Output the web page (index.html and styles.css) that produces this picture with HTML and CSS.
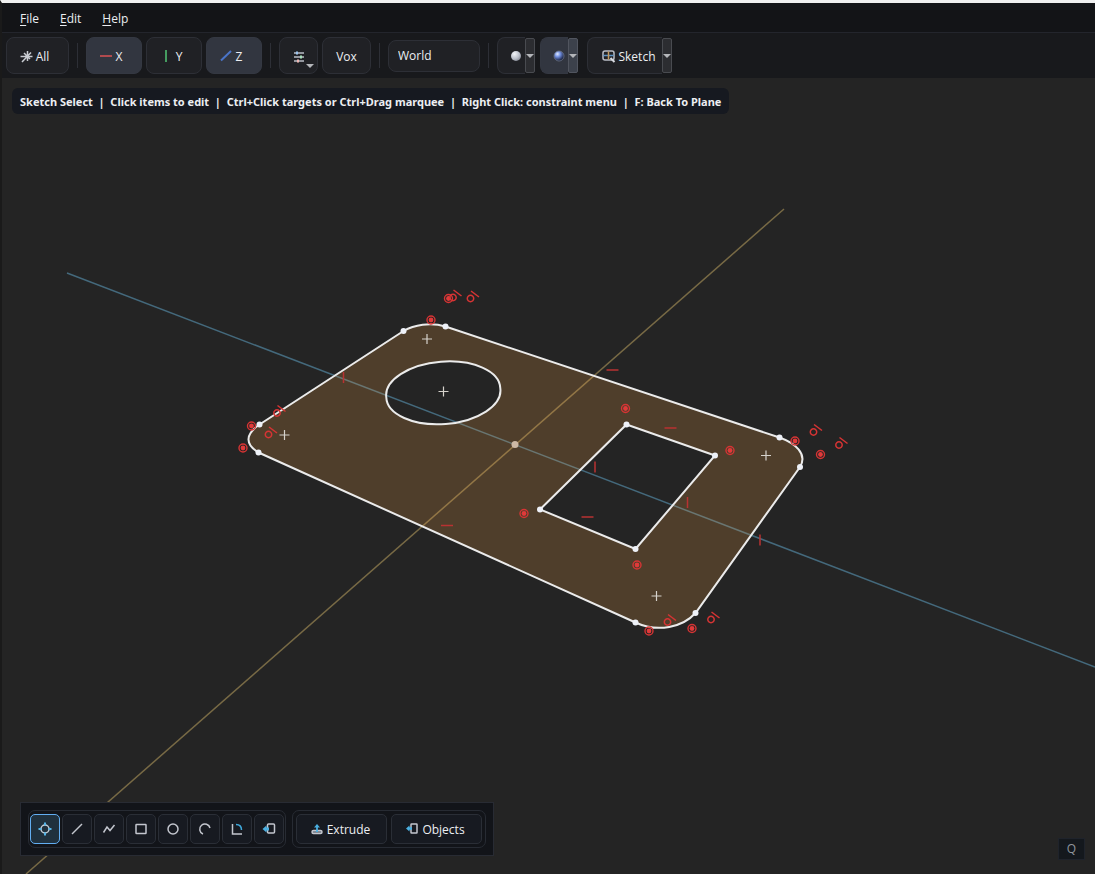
FILE: index.html
```html
<!DOCTYPE html>
<html lang="en">
<head>
    <meta charset="UTF-8">
    <meta name="viewport" content="width=device-width, initial-scale=1.0">
    <title>Sketch</title>
    <link rel="stylesheet" href="styles.css">
</head>
<body>
    <nav class="menu-bar">
        <button><u>F</u>ile</button>
        <button><u>E</u>dit</button>
        <button><u>H</u>elp</button>
    </nav>

    <div class="toolbar">
        <button class="tool-btn all-btn">
            <svg width="14" height="14" viewBox="0 0 14 14" fill="none" stroke="#c9ccd2" stroke-width="1.5">
                <path d="M0.500 6.500H12.500M7.500 1V11M2 12L11 2.500M4 3L10 9"/>
            </svg>
            All
        </button>
        <span class="separator"></span>
        <button class="tool-btn axis-btn active">
            <svg width="14" height="14" viewBox="0 0 14 14" stroke="#b04a4e" stroke-width="2"><path d="M0 6H12"/></svg>
            X
        </button>
        <button class="tool-btn axis-btn">
            <svg width="14" height="14" viewBox="0 0 14 14" stroke="#459c60" stroke-width="2"><path d="M6 0V12"/></svg>
            Y
        </button>
        <button class="tool-btn axis-btn active">
            <svg width="14" height="14" viewBox="0 0 14 14" stroke="#4a74c8" stroke-width="2"><path d="M1 10.500L11 1"/></svg>
            Z
        </button>
        <span class="separator"></span>
        <button class="tool-btn settings-btn" aria-label="Settings">
            <svg width="12" height="12" viewBox="0 0 12 12" stroke="#b9bdc6" stroke-width="1.500">
                <path d="M1 2H11M1 6H11M1 10H11"/>
                <path d="M4 0.500V3.500" stroke="#9cc4ee" stroke-width="2"/>
                <path d="M8 4.500V7.500" stroke="#a7e0bb" stroke-width="2"/>
                <path d="M5 8.500V11.500" stroke="#f0b9b5" stroke-width="2"/>
            </svg>
            <span class="arrow corner"></span>
        </button>
        <button class="tool-btn vox-btn">Vox</button>
        <span class="separator"></span>
        <select class="space-select" aria-label="Space">
            <option>World</option>
            <option>Local</option>
        </select>
        <span class="separator"></span>
        <div class="split">
            <button class="tool-btn split-main" aria-label="Solid shading">
                <svg width="12" height="12" viewBox="0 0 12 12">
                    <defs>
                        <radialGradient id="solidBall" cx="0.35" cy="0.3" r="0.8">
                            <stop offset="0" stop-color="#f2f4f8"/>
                            <stop offset="0.6" stop-color="#b9bec9"/>
                            <stop offset="1" stop-color="#7d818c"/>
                        </radialGradient>
                    </defs>
                    <circle cx="6" cy="6" r="5" fill="url(#solidBall)"/>
                </svg>
            </button>
            <button class="split-menu" aria-label="Solid shading options"><span class="arrow"></span></button>
        </div>
        <div class="split active shaded">
            <button class="tool-btn split-main" aria-label="Material shading">
                <svg width="12" height="12" viewBox="0 0 12 12">
                    <defs>
                        <radialGradient id="blueBall" cx="0.35" cy="0.3" r="0.7">
                            <stop offset="0" stop-color="#dfe9ff"/>
                            <stop offset="0.4" stop-color="#7391e2"/>
                            <stop offset="1" stop-color="#141c3a"/>
                        </radialGradient>
                    </defs>
                    <circle cx="6" cy="6" r="5" fill="url(#blueBall)" stroke="#6b7488" stroke-width="0.800"/>
                </svg>
            </button>
            <button class="split-menu" aria-label="Material shading options"><span class="arrow"></span></button>
        </div>
        <div class="split wide">
            <button class="tool-btn split-main">
                <svg width="14" height="14" viewBox="0 0 14 14" fill="none">
                    <rect x="1" y="1" width="11" height="9" rx="2" stroke="#b9bdc6" stroke-width="1.500"/>
                    <path d="M1.500 5.500H11.500" stroke="#5b93c4" stroke-width="1.500"/>
                    <path d="M6.500 1.500V9.500" stroke="#c4995c" stroke-width="1.500"/>
                    <path d="M8.500 8L12.500 12" stroke="#d5d8de" stroke-width="2"/>
                </svg>
                Sketch
            </button>
            <button class="split-menu" aria-label="Sketch options"><span class="arrow"></span></button>
        </div>
    </div>

    <main class="viewport">
        <svg class="scene" viewBox="2 78 1093 796" preserveAspectRatio="xMinYMin slice">
            <defs>
                <g id="coincident">
                    <circle r="4" fill="none" stroke="#d63434" stroke-width="1.400"/>
                    <circle r="2.400" fill="#e03a3a"/>
                </g>
                <g id="tangent" fill="none" stroke="#d63434" stroke-width="1.500">
                    <circle r="3.200"/>
                    <path d="M0.500 -7.500L8.500 -1.500"/>
                </g>
                <path id="horizontal" d="M-6 0H6" stroke="#b83232" stroke-width="1.500"/>
                <path id="vertical" d="M0 -5.500V5.500" stroke="#b83232" stroke-width="1.500"/>
                <path id="center" d="M-5 0H5M0 -5V5" stroke="#d6d2cc" stroke-width="1.200"/>
                <circle id="point" r="3" fill="#eef1f8"/>
            </defs>

            <!-- ground axes -->
            <path d="M67 273L1095 667" stroke="#44697c" stroke-width="1.500"/>
            <path d="M784 209L26 874" stroke="#786a45" stroke-width="1.500"/>

            <!-- profile with its two holes -->
            <path fill="#ffaa4b" fill-opacity="0.2" fill-rule="evenodd" stroke="#ebebeb" stroke-width="2" d="
                M403.500 331C414 325 430 322 445.500 326.500L779.500 437.500C795 443 808 454 800 467
                L695.500 613C683 627 658 633 635.500 622.500L258.500 452.500C246 445 244 435 259.500 424.500Z
                M626.500 424.500L715 455.500L635.500 549L540 509.500Z
                M386.300 397.300A57.200 30.400 -4.500 1 1 500.300 388.300A57.200 30.400 -4.500 1 1 386.300 397.300Z"/>
            <circle cx="515" cy="444.500" r="3.500" fill="#cdb9a5"/>

            <use href="#point" x="403.500" y="331"/>
            <use href="#point" x="445.500" y="326.500"/>
            <use href="#point" x="779.500" y="437.500"/>
            <use href="#point" x="800" y="467"/>
            <use href="#point" x="695.500" y="613"/>
            <use href="#point" x="635.500" y="622.500"/>
            <use href="#point" x="258.500" y="452.500"/>
            <use href="#point" x="259.500" y="424.500"/>
            <use href="#point" x="626.500" y="424.500"/>
            <use href="#point" x="715" y="455.500"/>
            <use href="#point" x="635.500" y="549"/>
            <use href="#point" x="540" y="509.500"/>

            <use href="#center" x="427" y="339"/>
            <use href="#center" x="443.500" y="391.500"/>
            <use href="#center" x="284.500" y="435"/>
            <use href="#center" x="766" y="455.500"/>
            <use href="#center" x="656.500" y="596"/>

            <!-- constraints -->
            <use href="#coincident" x="448.500" y="298.500"/>
            <use href="#coincident" x="431" y="320"/>
            <use href="#coincident" x="251.500" y="426"/>
            <use href="#coincident" x="243" y="448"/>
            <use href="#coincident" x="625.500" y="408.500"/>
            <use href="#coincident" x="730" y="450.500"/>
            <use href="#coincident" x="524" y="513.500"/>
            <use href="#coincident" x="637" y="565"/>
            <use href="#coincident" x="795" y="441"/>
            <use href="#coincident" x="820.500" y="454.500"/>
            <use href="#coincident" x="649" y="631"/>
            <use href="#coincident" x="692" y="628.500"/>

            <use href="#tangent" x="453" y="297.500"/>
            <use href="#tangent" x="470.500" y="298.500"/>
            <use href="#tangent" x="277" y="413"/>
            <use href="#tangent" x="268.500" y="434.500"/>
            <use href="#tangent" x="813.500" y="432"/>
            <use href="#tangent" x="839" y="445"/>
            <use href="#tangent" x="667.500" y="622"/>
            <use href="#tangent" x="711" y="619.500"/>

            <use href="#horizontal" x="612.500" y="370"/>
            <use href="#horizontal" x="670.500" y="428"/>
            <use href="#horizontal" x="587.500" y="517"/>
            <use href="#horizontal" x="447" y="525.500"/>
            <use href="#vertical" x="343.500" y="377.500"/>
            <use href="#vertical" x="595" y="467"/>
            <use href="#vertical" x="687.500" y="502.500"/>
            <use href="#vertical" x="760" y="540"/>
        </svg>

        <div class="hint">Sketch Select&nbsp; |&nbsp; Click items to edit&nbsp; |&nbsp; Ctrl+Click targets or Ctrl+Drag marquee&nbsp; |&nbsp; Right Click: constraint menu&nbsp; |&nbsp; F: Back To Plane</div>

        <div class="sketch-panel">
            <div class="group tools">
                <button class="active" aria-label="Select">
                    <svg width="14" height="14" viewBox="0 0 14 14" fill="none">
                        <circle cx="7" cy="7" r="4" stroke="#c3cdd6" stroke-width="1.500"/>
                        <path d="M7 0.500V3.500M7 10.500V13.500M0.500 7H3.500M10.500 7H13.500" stroke="#55b5e8" stroke-width="2"/>
                    </svg>
                </button>
                <button aria-label="Line">
                    <svg width="14" height="14" viewBox="0 0 14 14" fill="none"><path d="M2 12L12 2"/></svg>
                </button>
                <button aria-label="Polyline">
                    <svg width="14" height="14" viewBox="0 0 14 14" fill="none"><path d="M1.500 10.500L5 5L8 8.500L12.500 3"/></svg>
                </button>
                <button aria-label="Rectangle">
                    <svg width="14" height="14" viewBox="0 0 14 14" fill="none"><rect x="2" y="2.500" width="10" height="9" rx="0.500"/></svg>
                </button>
                <button aria-label="Circle">
                    <svg width="14" height="14" viewBox="0 0 14 14" fill="none"><circle cx="7" cy="7" r="5"/></svg>
                </button>
                <button aria-label="Arc">
                    <svg width="14" height="14" viewBox="0 0 14 14" fill="none"><path d="M5 12A5.200 5.200 0 1 1 12 6"/></svg>
                </button>
                <button aria-label="Fillet">
                    <svg width="14" height="14" viewBox="0 0 14 14" fill="none">
                        <path d="M2.500 2V12H12"/>
                        <path d="M6 2.500C9.500 2.500 11.500 4.500 11.500 8" stroke="#3fa9dc"/>
                    </svg>
                </button>
                <button aria-label="Project">
                    <svg width="14" height="14" viewBox="0 0 14 14" fill="none">
                        <rect x="5.500" y="2" width="7" height="9" rx="1"/>
                        <path d="M0.500 7L4.500 3.500V5.500H7V8.500H4.500V10.500Z" fill="#4bb0e2" stroke="none"/>
                    </svg>
                </button>
            </div>
            <div class="group actions">
                <button>
                    <svg width="12" height="12" viewBox="0 0 12 12" fill="none">
                        <rect x="1" y="7.500" width="10" height="3" rx="1.500" fill="#6d7480"/>
                        <path d="M6 9V3" stroke="#4bb0e2" stroke-width="1.800"/>
                        <path d="M3 4.500L6 1L9 4.500Z" fill="#4bb0e2" stroke="none"/>
                    </svg>
                    Extrude
                </button>
                <button>
                    <svg width="12" height="12" viewBox="0 0 12 12" fill="none">
                        <rect x="5" y="1" width="6" height="9" rx="0.500"/>
                        <path d="M0 5.500L3.500 2.500V4.300H6V6.700H3.500V8.500Z" fill="#4bb0e2" stroke="none"/>
                    </svg>
                    Objects
                </button>
            </div>
        </div>

        <div class="key-badge">Q</div>
    </main>
</body>
</html>
```
FILE: styles.css
```css
* {
    box-sizing: border-box;
}

body {
    margin: 0;
    height: 100vh;
    display: flex;
    flex-direction: column;
    border-top: 3px solid #f0f0f0;
    border-left: 2px solid #1a1a1a;
    background-color: #242424;
    color: #eceef2;
    font-family: "Open Sans", "Noto Sans", sans-serif;
    font-size: 12px;
    overflow: hidden;
}

button,
select {
    margin: 0;
    padding: 0;
    border: none;
    background: none;
    color: inherit;
    font: inherit;
}

.menu-bar {
    display: flex;
    gap: 21px;
    height: 30px;
    padding: 2px 18px 0;
    background-color: #131417;
    border-bottom: 1px solid #23252c;
}

.menu-bar u {
    text-underline-offset: 2px;
}

.toolbar {
    display: flex;
    align-items: center;
    gap: 4px;
    height: 45px;
    padding: 0 4px;
    background-color: #18191c;
}

.tool-btn {
    position: relative;
    display: flex;
    align-items: center;
    justify-content: center;
    gap: 2px;
    height: 37px;
    padding-top: 2px;
    border: 1px solid #2d2f36;
    border-radius: 8px;
    background-color: #202125;
}

.tool-btn.active,
.active .tool-btn {
    background-color: #323640;
    border-color: #343842;
}

.all-btn {
    width: 63px;
    padding-right: 6px;
}

.axis-btn {
    width: 56px;
    padding-right: 6px;
}

.settings-btn {
    width: 39px;
}

.vox-btn {
    width: 49px;
}

.separator {
    width: 1px;
    height: 25px;
    margin: 0 4px;
    background-color: #2d2f36;
}

.space-select {
    width: 92px;
    height: 32px;
    padding: 0 9px;
    border: 1px solid #2d2f36;
    border-radius: 8px;
    background-color: #202125;
    appearance: none;
}

.arrow {
    display: block;
    border: 4px solid transparent;
    border-top-color: #b4b6ba;
    border-bottom: none;
}

.arrow.corner {
    position: absolute;
    right: 3px;
    bottom: 5px;
}

.split {
    display: flex;
    align-items: center;
    margin-right: 1px;
}

.split-main {
    width: 28px;
    padding-top: 0;
    padding-left: 8px;
    border-right: none;
    border-radius: 8px 0 0 8px;
}

.wide .split-main {
    width: 75px;
    padding-top: 2px;
}

.split-menu {
    display: flex;
    align-items: center;
    justify-content: center;
    width: 10px;
    height: 35px;
    border: 1px solid #494b50;
    border-radius: 2px;
    background-color: #2c2d31;
}

.active .split-menu {
    background-color: #3c414b;
    border-color: #51555f;
}

.shaded {
    margin-right: 5px;
}

.viewport {
    position: relative;
    flex: 1;
    min-height: 0;
}

.scene {
    display: block;
    width: 100%;
    height: 100%;
}

.hint {
    position: absolute;
    top: 10px;
    left: 10px;
    padding: 1px 8px 0;
    border-radius: 6px;
    background-color: #161920;
    font-family: "Noto Sans", sans-serif;
    font-size: 11px;
    font-weight: bold;
    line-height: 25px;
}

.sketch-panel {
    position: absolute;
    left: 18px;
    bottom: 18px;
    display: flex;
    gap: 6px;
    padding: 7px;
    border: 1px solid #282b33;
    background-color: #121419;
}

.group {
    display: flex;
    padding: 3px;
    border: 1px solid #272b33;
    border-radius: 7px;
}

.group.tools {
    gap: 2px;
    padding: 3px 1px;
}

.group.actions {
    gap: 4px;
}

.group button {
    display: flex;
    align-items: center;
    justify-content: center;
    gap: 4px;
    width: 30px;
    height: 30px;
    border: 1px solid #2a2e36;
    border-radius: 5px;
    background-color: #171a21;
}

.group svg {
    stroke: #c3c6ce;
    stroke-width: 1.5;
}

.group button.active {
    border-color: #62aef2;
    background-color: #20313e;
}

.group.actions button {
    width: 91px;
    padding-right: 2px;
}

.key-badge {
    position: absolute;
    right: 10px;
    bottom: 14px;
    width: 27px;
    border: 1px solid #1f232b;
    background-color: #14181d;
    color: #8f949c;
    line-height: 20px;
    text-align: center;
}
```
